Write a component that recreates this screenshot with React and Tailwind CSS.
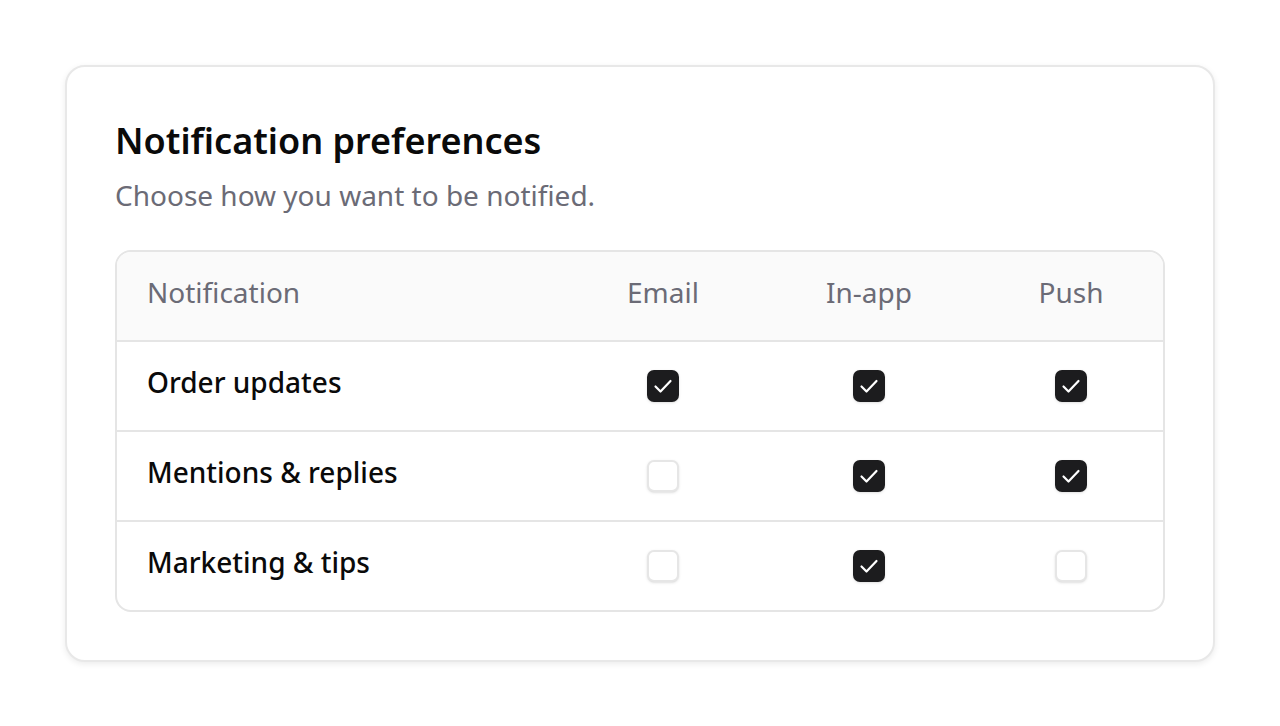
import React from "react";

const rows = [
  { label: "Order updates", email: true, inApp: true, push: true },
  { label: "Mentions & replies", email: false, inApp: true, push: true },
  { label: "Marketing & tips", email: false, inApp: true, push: false },
];

const Check = ({ checked }) => (
  <div className="flex justify-center">
    {checked ? (
      <div className="w-8 h-8 rounded-[7px] bg-[#1c1c1e] flex items-center justify-center shadow-sm">
        <svg width="24" height="24" viewBox="0 0 24 24" fill="none" stroke="white" strokeWidth="2.2" strokeLinecap="round" strokeLinejoin="round">
          <path d="M4.5 12.5l5 5L19.5 7" />
        </svg>
      </div>
    ) : (
      <div className="w-8 h-8 rounded-[7px] bg-white border-2 border-[#e6e6e6] shadow-sm" />
    )}
  </div>
);

export default function App() {
  return (
    <div className="min-h-screen bg-white p-[65px] font-['Noto_Sans',sans-serif]">
      <div className="rounded-[20px] border-2 border-[#e8e8e8] bg-white p-12 shadow-[0_2px_6px_rgba(0,0,0,0.08)]">
        <h1 className="text-[36px] leading-[52px] font-semibold text-[#0a0a0a]">Notification preferences</h1>
        <p className="mt-[10px] text-[28px] leading-9 text-[#6b6b76]">Choose how you want to be notified.</p>
        <div className="mt-[37px] rounded-2xl border-2 border-[#e5e5e5] overflow-hidden">
          <div className="grid grid-cols-[1fr_128px_284px_120px] items-center h-[88px] pl-[30px] pr-8 bg-[#fafafa] text-[28px] text-[#6b6b76]">
            <div className="pb-2">Notification</div>
            <div className="pb-2 text-center">Email</div>
            <div className="pb-2 text-center">In-app</div>
            <div className="pb-2 text-center">Push</div>
          </div>
          {rows.map((r) => (
            <div key={r.label} className="grid grid-cols-[1fr_128px_284px_120px] items-center h-[90px] pl-[30px] pr-8 border-t-2 border-[#e5e5e5] text-[28px] font-medium text-[#0a0a0a]">
              <div className="pb-2">{r.label}</div>
              <Check checked={r.email} />
              <Check checked={r.inApp} />
              <Check checked={r.push} />
            </div>
          ))}
        </div>
      </div>
    </div>
  );
}
